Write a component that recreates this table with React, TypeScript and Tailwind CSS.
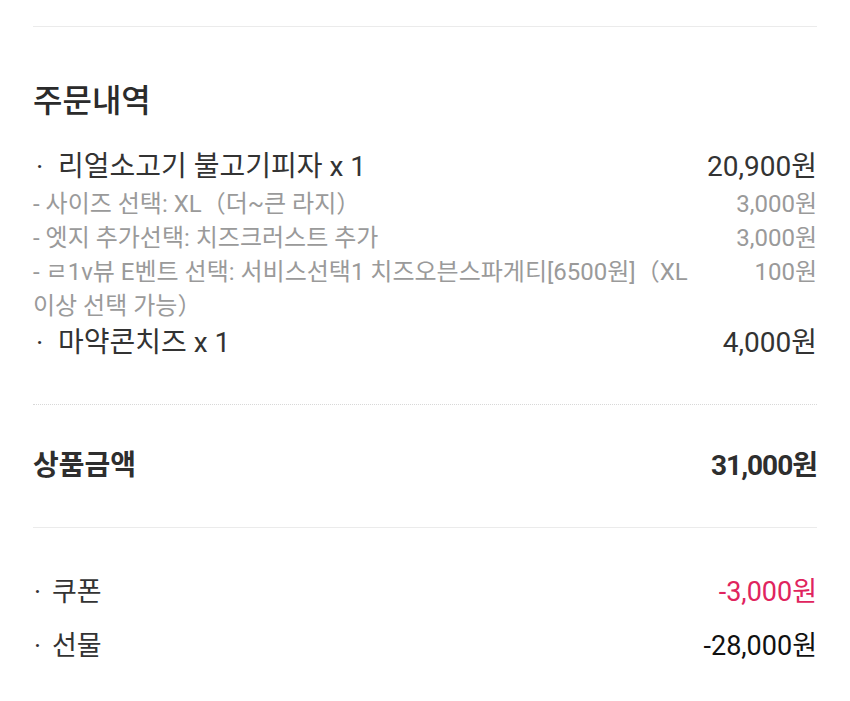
import React from "react";

type Option = { label: string; price: string };
type Item = { name: string; price: string; options: Option[] };

const items: Item[] = [
  {
    name: "리얼소고기 불고기피자 x 1",
    price: "20,900원",
    options: [
      { label: "- 사이즈 선택: XL（더~큰 라지）", price: "3,000원" },
      { label: "- 엣지 추가선택: 치즈크러스트 추가", price: "3,000원" },
      {
        label: "- ㄹ1v뷰 E벤트 선택: 서비스선택1 치즈오븐스파게티[6500원]（XL 이상 선택 가능）",
        price: "100원",
      },
    ],
  },
  { name: "마약콘치즈 x 1", price: "4,000원", options: [] },
];

const font = { fontFamily: '"Roboto", "Noto Sans CJK KR", sans-serif' };

export default function App() {
  return (
    <main className="min-h-screen bg-white text-[#333]" style={font}>
      <section className="px-[33px] pt-[26px]">
        <div className="border-t border-[#ebebeb]" />

        {/* 주문내역 */}
        <h2 className="mt-[54px] text-[32px] font-medium leading-[40px] text-[#2b2b2b]">주문내역</h2>

        <div className="mt-[26px] pb-[41px]">
          {items.map((item) => (
            <div key={item.name}>
              <div className="flex items-center justify-between text-[28px] leading-[40px]">
                <span>
                  <span className="inline-block w-[25px] pl-[3px]">·</span>
                  {item.name}
                </span>
                <span>{item.price}</span>
              </div>
              {item.options.map((opt) => (
                <div key={opt.label} className="flex justify-between gap-[40px] text-[24px] leading-[34px] text-[#9a9a9a]">
                  <span>{opt.label}</span>
                  <span className="shrink-0">{opt.price}</span>
                </div>
              ))}
            </div>
          ))}
        </div>

        <div className="border-t border-dotted border-[#d8d8d8]" />

        {/* 상품금액 */}
        <div className="flex items-center justify-between pt-[41px] pb-[41px] text-[28px] font-bold leading-[40px] text-[#2e2e2e]">
          <span>상품금액</span>
          <span className="tracking-[-1px]">31,000원</span>
        </div>

        <div className="border-t border-[#ebebeb]" />

        <div className="pt-[37px]">
          <div className="flex items-center justify-between text-[27px] leading-[54px]">
            <span>
              <span className="inline-block w-[19px] pl-[1px]">·</span>
              쿠폰
            </span>
            <span className="text-[#e0245e]">-3,000원</span>
          </div>
          <div className="flex items-center justify-between text-[27px] leading-[54px]">
            <span>
              <span className="inline-block w-[19px] pl-[1px]">·</span>
              선물
            </span>
            <span className="text-[#111]">-28,000원</span>
          </div>
        </div>
      </section>
    </main>
  );
}
